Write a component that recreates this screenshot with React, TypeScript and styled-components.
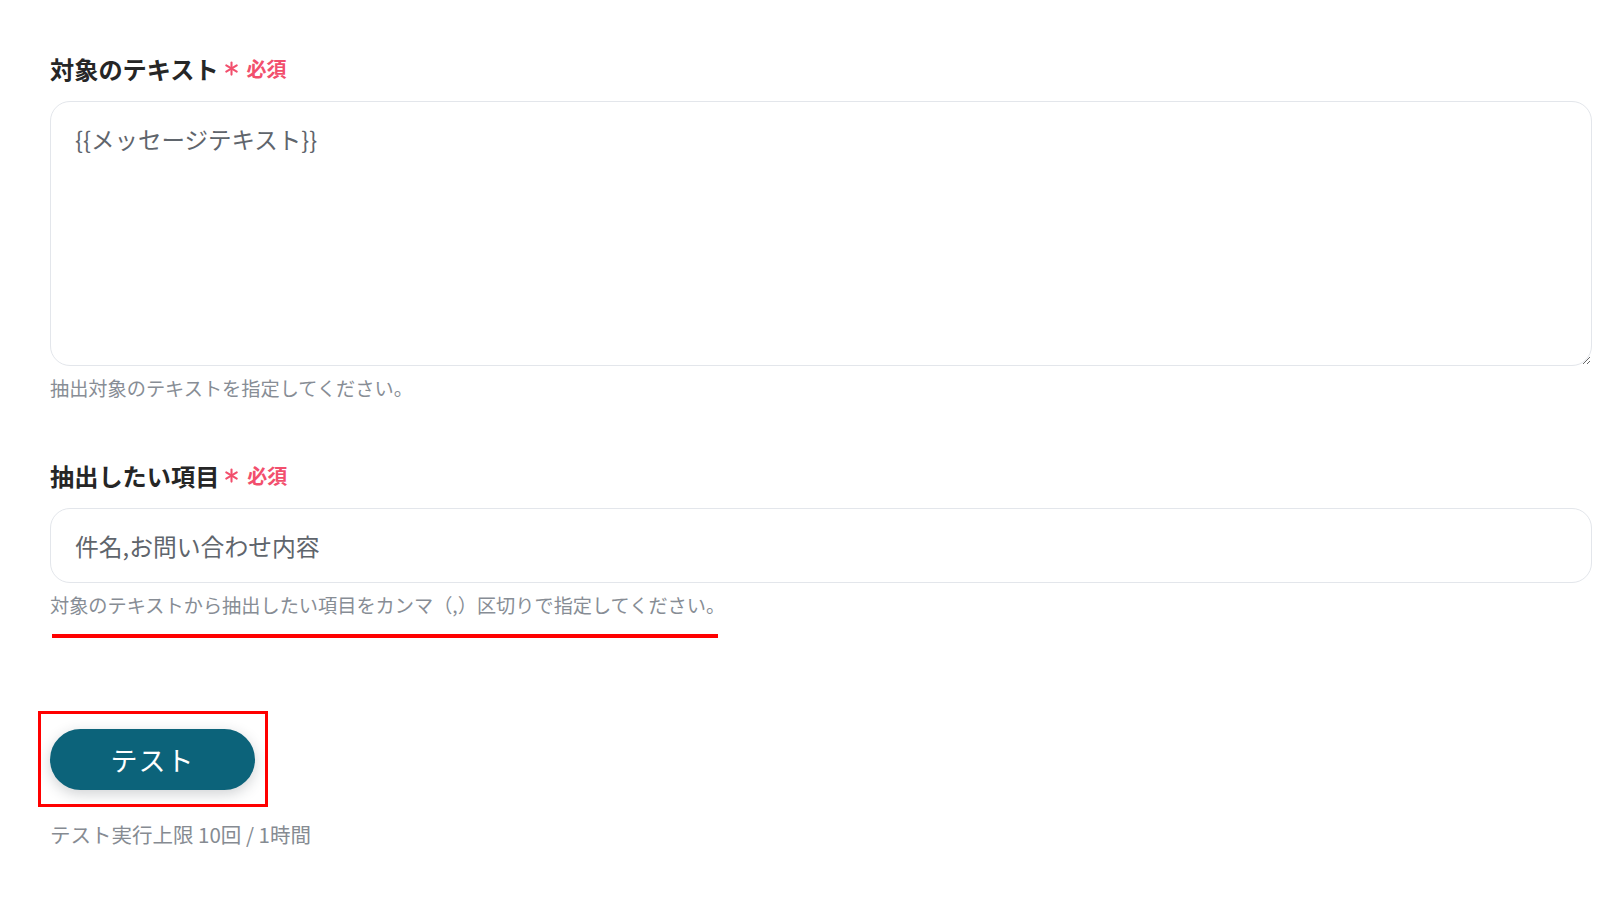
import styled, { createGlobalStyle } from 'styled-components';

const GlobalStyle = createGlobalStyle`
  * {
    box-sizing: border-box;
  }
  body {
    margin: 0;
    background: #ffffff;
    font-family: "Noto Sans CJK JP", "Noto Sans", sans-serif;
  }
`;

interface FieldProps {
  label: string;
  help: string;
  children: React.ReactNode;
}

function Field({ label, help, children }: FieldProps) {
  return (
    <FieldWrap>
      <Label>
        {label}
        <Required>
          <svg width="15" height="15" viewBox="0 0 16 16">
            <g stroke="#f24f6d" strokeWidth="2.2" strokeLinecap="round">
              <line x1="8" y1="1.5" x2="8" y2="14.5" />
              <line x1="2.4" y1="4.75" x2="13.6" y2="11.25" />
              <line x1="2.4" y1="11.25" x2="13.6" y2="4.75" />
            </g>
          </svg>
          必須
        </Required>
      </Label>
      {children}
      <Help>{help}</Help>
    </FieldWrap>
  );
}

function App() {
  return (
    <>
      <GlobalStyle />
      <Page>
        <Field label="対象のテキスト" help="抽出対象のテキストを指定してください。">
          <TextArea readOnly value="{{メッセージテキスト}}" />
        </Field>
        <Field
          label="抽出したい項目"
          help="対象のテキストから抽出したい項目をカンマ（,）区切りで指定してください。"
        >
          <Input readOnly value="件名,お問い合わせ内容" />
        </Field>
        <Underline />
        <Highlight>
          <TestButton type="button">テスト</TestButton>
        </Highlight>
        <Limit>テスト実行上限 10回 / 1時間</Limit>
      </Page>
    </>
  );
}

export default App;

const Page = styled.div`
  width: 1600px;
  height: 898px;
  padding: 53px 8px 0 50px;
  display: flex;
  flex-direction: column;
  align-items: flex-start;
`;

const FieldWrap = styled.div`
  width: 100%;
  display: flex;
  flex-direction: column;
  & + & {
    margin-top: 59px;
  }
`;

const Label = styled.div`
  display: flex;
  align-items: center;
  height: 30px;
  font-size: 24.2px;
  font-weight: 700;
  color: #262626;
  margin-bottom: 18px;
`;

const Required = styled.span`
  display: inline-flex;
  align-items: center;
  gap: 8px;
  margin-left: 5px;
  font-size: 20px;
  font-weight: 700;
  color: #f24f6d;
  svg {
    margin-top: 1px;
  }
`;

const TextArea = styled.textarea`
  width: 100%;
  height: 265px;
  padding: 20px 24px;
  border: 1.5px solid #e3e6eb;
  border-radius: 20px;
  font-family: "Noto Sans CJK JP", "Noto Sans", sans-serif;
  font-size: 23.5px;
  line-height: 35px;
  color: #5f656c;
  background: #ffffff;
  outline: none;
  resize: vertical;
`;

const Input = styled.input`
  width: 100%;
  height: 75px;
  padding: 0 24px;
  border: 1.5px solid #e3e6eb;
  border-radius: 20px;
  font-family: "Noto Sans CJK JP", "Noto Sans", sans-serif;
  font-size: 23.8px;
  color: #5f656c;
  background: #ffffff;
  outline: none;
`;

const Help = styled.p`
  margin: 9px 0 0;
  font-size: 19.2px;
  line-height: 26px;
  color: #878d95;
`;

const Underline = styled.div`
  width: 666px;
  height: 4px;
  margin: 16px 0 0 2px;
  background: #ff0000;
`;

const Highlight = styled.div`
  margin: 73px 0 0 -12px;
  padding: 15px 10px 14px 9px;
  border: 3px solid #ff0000;
  display: inline-flex;
`;

const TestButton = styled.button`
  width: 205px;
  height: 61px;
  border: none;
  border-radius: 31px;
  background: #0c637a;
  color: #ffffff;
  font-family: "Noto Sans CJK JP", "Noto Sans", sans-serif;
  font-size: 27px;
  font-weight: 400;
  letter-spacing: 1px;
  box-shadow: 0 4px 14px rgba(40, 50, 60, 0.22);
  cursor: pointer;
`;

const Limit = styled.p`
  margin: 14px 0 0;
  font-size: 20.5px;
  line-height: 26px;
  color: #868b92;
`;
